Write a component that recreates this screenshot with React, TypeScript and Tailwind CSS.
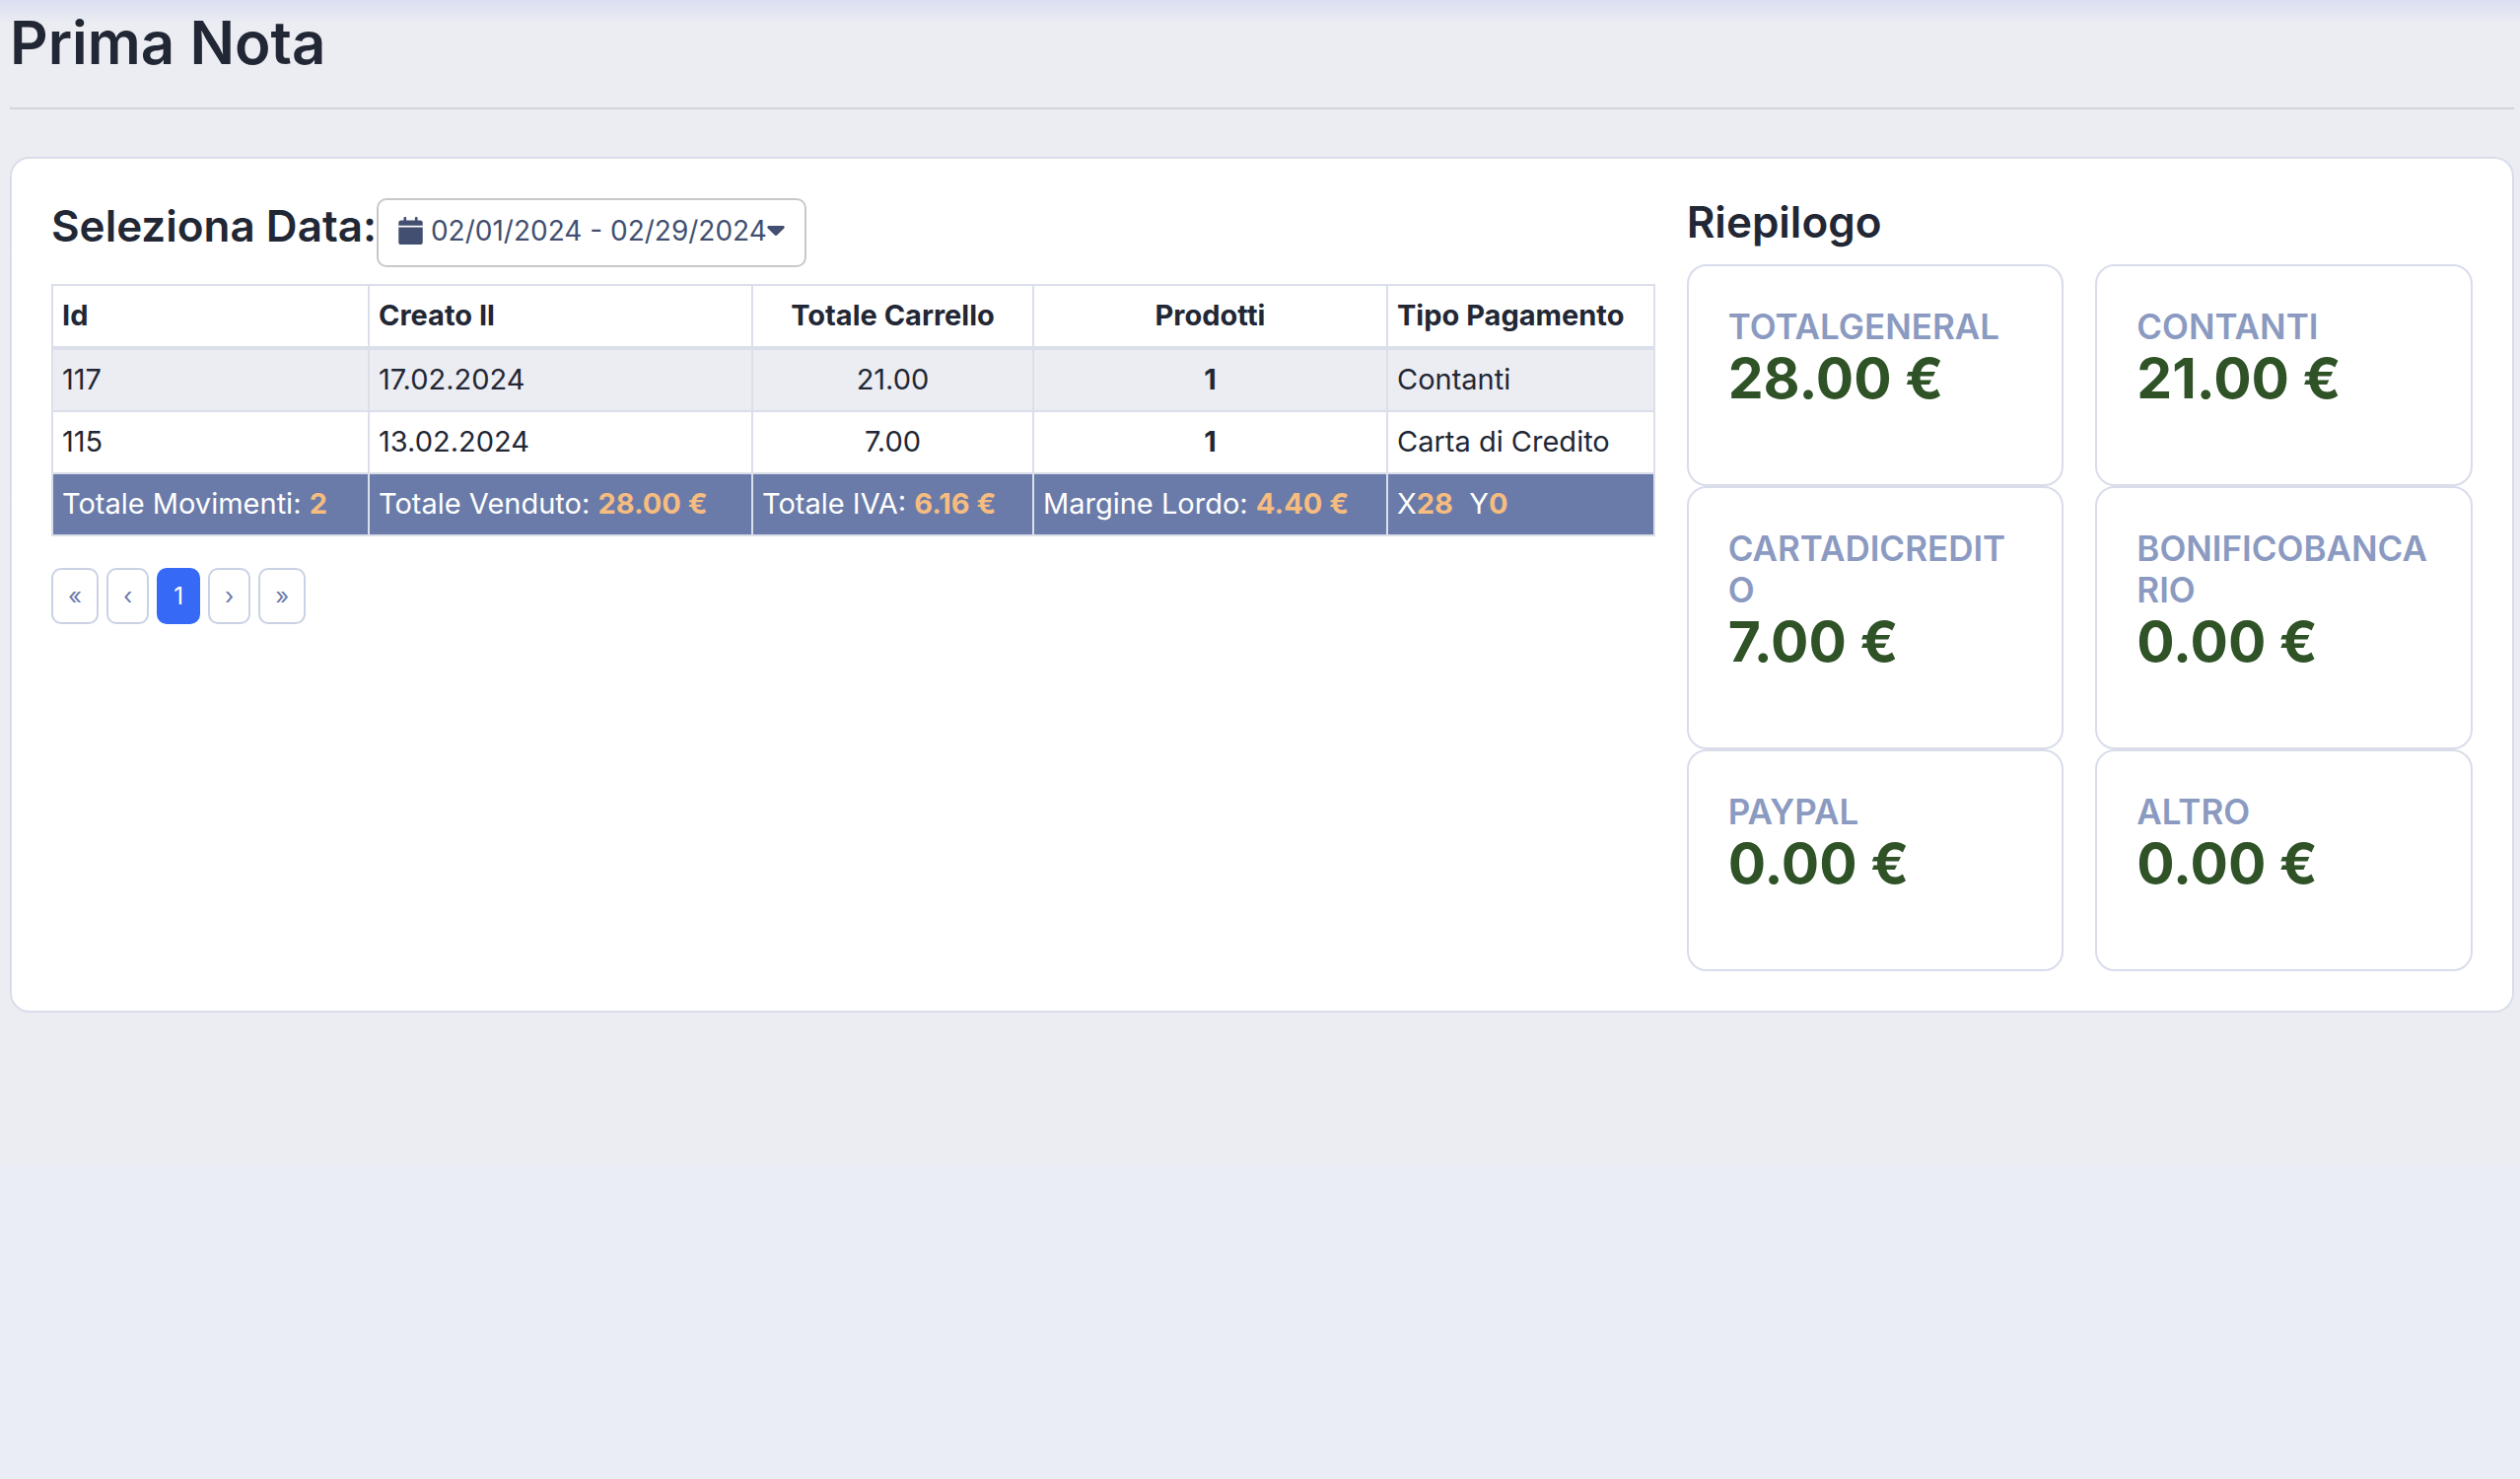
import { useState } from "react";

type Movement = {
  id: number;
  createdAt: string;
  total: string;
  products: number;
  payment: string;
};

const MOVEMENTS: Movement[] = [
  { id: 117, createdAt: "17.02.2024", total: "21.00", products: 1, payment: "Contanti" },
  { id: 115, createdAt: "13.02.2024", total: "7.00", products: 1, payment: "Carta di Credito" },
];

const SUMMARY = [
  { label: "TOTALGENERAL", value: "28.00 €" },
  { label: "CONTANTI", value: "21.00 €" },
  { label: "CARTADICREDITO", value: "7.00 €" },
  { label: "BONIFICOBANCARIO", value: "0.00 €" },
  { label: "PAYPAL", value: "0.00 €" },
  { label: "ALTRO", value: "0.00 €" },
];

const PAGES = [
  { label: "«", name: "Prima pagina" },
  { label: "‹", name: "Pagina precedente" },
  { label: "1", name: "Pagina 1" },
  { label: "›", name: "Pagina successiva" },
  { label: "»", name: "Ultima pagina" },
];

const CELL = "border-2 border-[#dadfea] px-[9px] pt-[9px] pb-[11px]";

function CalendarIcon() {
  return (
    <svg viewBox="0 0 448 512" className="h-7 w-[25px] shrink-0" fill="currentColor" aria-hidden>
      <path d="M112 0h16a16 16 0 0 1 16 16v48h160V16a16 16 0 0 1 16-16h16a16 16 0 0 1 16 16v48h48a48 48 0 0 1 48 48v48H0v-48a48 48 0 0 1 48-48h48V16a16 16 0 0 1 16-16z" />
      <path d="M0 192h448v272a48 48 0 0 1-48 48H48a48 48 0 0 1-48-48z" />
    </svg>
  );
}

function CaretDown() {
  return (
    <svg viewBox="0 0 18 10" className="h-2.5 w-[18px] shrink-0" fill="currentColor" aria-hidden>
      <path d="M2 0h14c1.600 0 2.300 1.500 1.300 2.600l-6.900 6.700c-.8.800-2 .8-2.800 0L.7 2.600C-.3 1.500.4 0 2 0z" />
    </svg>
  );
}

function Amount({ children }: { children: string }) {
  return <strong className="font-bold text-[#f6bc80]">{children}</strong>;
}

function MovementsTable() {
  return (
    <table className="mt-[17px] w-full table-fixed border-collapse text-left text-[29px] leading-[41px] whitespace-nowrap">
      {/* larghezze relative: la tabella le scala in proporzione */}
      <colgroup>
        <col className="w-[321px]" />
        <col className="w-[389px]" />
        <col className="w-[285px]" />
        <col className="w-[359px]" />
        <col className="w-[271px]" />
      </colgroup>
      <thead>
        <tr className="border-b-4 border-[#dadfea]">
          <th className={CELL}>Id</th>
          <th className={CELL}>Creato Il</th>
          <th className={`${CELL} text-center`}>Totale Carrello</th>
          <th className={`${CELL} text-center`}>Prodotti</th>
          <th className={CELL}>Tipo Pagamento</th>
        </tr>
      </thead>
      <tbody>
        {MOVEMENTS.map((m) => (
          <tr key={m.id} className="odd:bg-[#ecedf3]">
            <td className={CELL}>{m.id}</td>
            <td className={CELL}>{m.createdAt}</td>
            <td className={`${CELL} text-center`}>{m.total}</td>
            <td className={`${CELL} text-center font-bold`}>{m.products}</td>
            <td className={CELL}>{m.payment}</td>
          </tr>
        ))}
      </tbody>
      <tfoot>
        <tr className="bg-[#6a7ba9] text-white">
          <td className={CELL}>
            Totale Movimenti: <Amount>2</Amount>
          </td>
          <td className={CELL}>
            Totale Venduto: <Amount>28.00 €</Amount>
          </td>
          <td className={CELL}>
            Totale IVA: <Amount>6.16 €</Amount>
          </td>
          <td className={CELL}>
            Margine Lordo: <Amount>4.40 €</Amount>
          </td>
          <td className={CELL}>
            X<Amount>28</Amount>&nbsp; Y<Amount>0</Amount>
          </td>
        </tr>
      </tfoot>
    </table>
  );
}

function Pagination() {
  const [current, setCurrent] = useState("1");

  return (
    <nav aria-label="Paginazione" className="mt-8 flex gap-2">
      {PAGES.map(({ label, name }) => (
        <button
          key={label}
          type="button"
          aria-label={name}
          aria-current={label === current ? "page" : undefined}
          onClick={() => label === "1" && setCurrent(label)}
          className={`h-[57px] rounded-[10px] border-2 px-[15px] text-[24px] leading-[36px] ${
            label === current
              ? "border-[#366af6] bg-[#366af6] text-white"
              : "border-[#c9d1e4] bg-white text-[#6a7ba9]"
          }`}
        >
          {label}
        </button>
      ))}
    </nav>
  );
}

function SummaryCard({ label, value }: { label: string; value: string }) {
  return (
    <div className="rounded-[20px] border-2 border-[#d9ddeb] p-10">
      <h3 className="text-[35px] leading-[42px] font-semibold break-all text-[#8b9ac1]">{label}</h3>
      <p className="mb-[35px] text-[57px] leading-[64px] font-bold text-[#2f5227]">{value}</p>
    </div>
  );
}

export default function App() {
  return (
    <div className="min-h-screen bg-[#eaedf6] font-[Inter,'Liberation_Sans',sans-serif] text-[#222735]">
      <main className="bg-[#ecedf2] bg-linear-to-b from-[#dadff2] to-[#ecedf2] to-[24px] pt-2 pr-1.5 pb-[155px] pl-2.5">
        <h1 className="text-[60px] leading-[70px] font-semibold">Prima Nota</h1>
        <hr className="mt-[31px] border-t-2 border-[#d0d6de]" />

        <section className="mt-12 grid grid-cols-3 gap-8 rounded-[20px] border-2 border-[#d9ddeb] bg-white p-10">
          <div className="col-span-2">
            <div className="flex items-start">
              <h2 id="date-label" className="text-[44px] leading-[56px] font-semibold">
                Seleziona Data:
              </h2>
              <button
                type="button"
                aria-describedby="date-label"
                className="flex items-center rounded-[10px] border-2 border-[#c8c8c8] bg-white px-5 pt-2.5 pb-3.5 text-[28px] leading-[42px] text-[#424f70]"
              >
                <CalendarIcon />
                <span className="ml-2">02/01/2024 - 02/29/2024</span>
                <CaretDown />
              </button>
            </div>
            <MovementsTable />
            <Pagination />
          </div>

          <aside>
            <h2 className="mb-[18px] text-[44px] leading-[49px] font-semibold">Riepilogo</h2>
            <div className="grid grid-cols-2 gap-x-8">
              {SUMMARY.map((item) => (
                <SummaryCard key={item.label} label={item.label} value={item.value} />
              ))}
            </div>
          </aside>
        </section>
      </main>
    </div>
  );
}
